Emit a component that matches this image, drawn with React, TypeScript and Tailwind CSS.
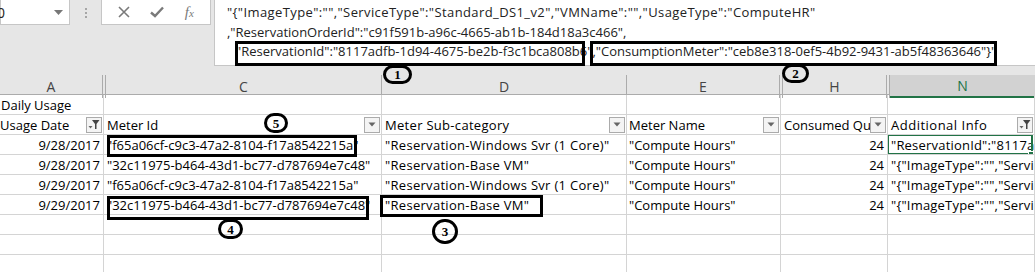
import React from 'react';

const font = { fontFamily: '"Open Sans", "Liberation Sans", sans-serif' };

const DropBtn = () => (
  <div className="w-[16px] h-[16px] shrink-0 border border-[#ababab] bg-[#f4f4f4] flex items-center justify-center mr-[1px]">
    <svg width="8" height="5" viewBox="0 0 8 5">
      <path d="M0.5 0.5 L7.5 0.5 L4 4.5 Z" fill="#666" />
    </svg>
  </div>
);

const FilterBtn = () => (
  <div className="w-[16px] h-[16px] shrink-0 border border-[#ababab] bg-[#f4f4f4] flex items-center justify-center mr-[1px]">
    <svg width="12" height="11" viewBox="0 0 12 11">
      <path d="M4 1 L11.5 1 L8.5 5 L8.5 10 L7 10 L7 5 Z" fill="#444" />
      <path d="M0.5 7 L4.5 7 L2.5 9.5 Z" fill="#666" />
    </svg>
  </div>
);

const rows = [
  { date: '9/28/2017', id: '"f65a06cf-c9c3-47a2-8104-f17a8542215a"', sub: '"Reservation-Windows Svr (1 Core)"', info: '"ReservationId":"8117adfb-1d94-4675-be2b' },
  { date: '9/28/2017', id: '"32c11975-b464-43d1-bc77-d787694e7c48"', sub: '"Reservation-Base VM"', info: '"{"ImageType":"","ServiceType":"Standard' },
  { date: '9/29/2017', id: '"f65a06cf-c9c3-47a2-8104-f17a8542215a"', sub: '"Reservation-Windows Svr (1 Core)"', info: '"{"ImageType":"","ServiceType":"Standard' },
  { date: '9/29/2017', id: '"32c11975-b464-43d1-bc77-d787694e7c48"', sub: '"Reservation-Base VM"', info: '"{"ImageType":"","ServiceType":"Standard' },
];

const formula1 = '"{"ImageType":"","ServiceType":"Standard_DS1_v2","VMName":"","UsageType":"ComputeHR"';
const formula2 = ',"ReservationOrderId":"c91f591b-a96c-4665-ab1b-184d18a3c466",';
const formula3 = '"ReservationId":"8117adfb-1d94-4675-be2b-f3c1bca808b6","ConsumptionMeter":"ceb8e318-0ef5-4b92-9431-ab5f48363646"}"';

const grid = 'grid grid-cols-[104px_278px_245px_154px_107px_1fr]';
const cell = 'h-[20px] border-r border-b border-[#d4d4d4] overflow-hidden whitespace-nowrap leading-[20px]';

// annotation boxes + circled numbers drawn over the sheet
const Box = ({ c }: { c: string }) => <div className={`absolute border-[3px] border-black ${c}`} />;
const Circle = ({ n, c }: { n: number; c: string }) => (
  <div
    className={`absolute border-[3px] border-black rounded-full flex items-center justify-center text-[13px] leading-none font-bold text-black ${c}`}
    style={{ fontFamily: '"Liberation Serif", serif' }}
  >
    {n}
  </div>
);

export default function App() {
  return (
    <div className="relative w-[1035px] h-[272px] overflow-hidden bg-white text-[13px] text-black" style={font}>
      {/* Formula bar area */}
      <div className="h-[75px] bg-[#e6e6e6] flex items-start">
        <div className="w-[70px] h-[25px] bg-white border border-t-0 border-[#c6c6c6] flex items-center justify-between pr-[6px]">
          <span className="text-[14px] ml-[-4px] text-[#222]">0</span>
          <svg width="9" height="5" viewBox="0 0 9 5"><path d="M0 0 L9 0 L4.5 5 Z" fill="#777" /></svg>
        </div>
        <div className="w-[31px] h-[25px] flex flex-col items-center justify-center gap-[2px]">
          <div className="w-[2px] h-[2px] bg-[#a6a6a6]" />
          <div className="w-[2px] h-[2px] bg-[#a6a6a6]" />
          <div className="w-[2px] h-[2px] bg-[#a6a6a6]" />
        </div>
        <div className="w-[110px] h-[25px] bg-white border border-t-0 border-[#c6c6c6] flex items-center justify-around px-[6px]">
          <svg width="12" height="12" viewBox="0 0 12 12">
            <path d="M1 1 L11 11 M11 1 L1 11" stroke="#7a7a7a" strokeWidth="1.6" />
          </svg>
          <svg width="14" height="12" viewBox="0 0 14 12">
            <path d="M1 6.5 L5 10 L13 1.5" stroke="#7a7a7a" strokeWidth="2.4" fill="none" />
          </svg>
          <span className="text-[15px] italic text-[#7a7a7a]" style={{ fontFamily: '"Liberation Serif", serif' }}>
            f<span className="text-[11px]">x</span>
          </span>
        </div>
        <div className="ml-[3px] flex-1 h-[66px] bg-white border border-t-0 border-r-0 border-[#c6c6c6] pl-[12px] pt-[3px] text-[#222] leading-[19.5px] whitespace-nowrap">
          <div className="tracking-[0.4px]">{formula1}</div>
          <div>{formula2}</div>
          <div className="pl-[9px]">{formula3}</div>
        </div>
      </div>

      {/* Column letters */}
      <div className="grid grid-cols-[102px_4px_276px_245px_152px_4px_103px_4px_1fr] h-[20px] bg-[#e6e6e6] border-b border-[#ababab] text-[14px] text-[#444]">
        <div className="flex items-center justify-center">A</div>
        <div className="border-x border-[#ababab]" />
        <div className="flex items-center justify-center border-r border-[#ababab]">C</div>
        <div className="flex items-center justify-center border-r border-[#ababab]">D</div>
        <div className="flex items-center justify-center">E</div>
        <div className="border-x border-[#ababab]" />
        <div className="flex items-center justify-center">H</div>
        <div className="border-x border-[#ababab]" />
        <div className="flex items-center justify-center bg-[#d2d2d2] text-[#217346] border-b-2 border-[#217346]">N</div>
      </div>

      {/* Title row */}
      <div className={grid}>
        <div className={`${cell} pl-[1px] overflow-visible`}>Daily Usage</div>
        <div className={cell} />
        <div className={cell} />
        <div className={cell} />
        <div className={cell} />
        <div className={cell} />
      </div>

      {/* Table header row */}
      <div className={grid}>
        <div className={`${cell} flex items-center justify-between`}>
          <span>Usage Date</span>
          <FilterBtn />
        </div>
        <div className={`${cell} flex items-center justify-between`}>
          <span className="pl-[3px]">Meter Id</span>
          <DropBtn />
        </div>
        <div className={`${cell} flex items-center justify-between`}>
          <span className="pl-[3px] tracking-[0.3px]">Meter Sub-category</span>
          <DropBtn />
        </div>
        <div className={`${cell} flex items-center justify-between`}>
          <span className="pl-[2px]">Meter Name</span>
          <DropBtn />
        </div>
        <div className={`${cell} flex items-center`}>
          <span className="pl-[3px] flex-1 overflow-hidden">Consumed Quantity</span>
          <DropBtn />
        </div>
        <div className={`${cell} flex items-center justify-between`}>
          <span className="pl-[3px] tracking-[0.5px]">Additional Info</span>
          <FilterBtn />
        </div>
      </div>

      {/* Data rows */}
      {rows.map((r, i) => (
        <div key={i} className={grid}>
          <div className={`${cell} text-right pr-[3px]`}>{r.date}</div>
          <div className={`${cell} pl-[3px]`}>{r.id}</div>
          <div className={`${cell} pl-[3px] tracking-[0.3px]`}>{r.sub}</div>
          <div className={`${cell} pl-[2px]`}>"Compute Hours"</div>
          <div className={`${cell} text-right pr-[3px]`}>24</div>
          <div className={`${cell} pl-[3px] tracking-[0.2px] ${i === 0 ? 'relative' : ''}`}>
            {r.info}
            {i === 0 && (
              <>
                <div className="absolute left-[-1px] top-[-1px] right-[1px] bottom-[-1px] border-2 border-[#217346]" />
                <div className="absolute right-0 bottom-[-3px] w-[6px] h-[6px] bg-[#217346] border border-white" />
              </>
            )}
          </div>
        </div>
      ))}

      {/* Empty rows */}
      {[0, 1, 2].map((i) => (
        <div key={i} className={grid}>
          <div className={cell} />
          <div className={cell} />
          <div className={cell} />
          <div className={cell} />
          <div className={cell} />
          <div className={cell} />
        </div>
      ))}

      {/* Annotations */}
      <Box c="left-[235px] top-[41px] w-[350px] h-[25px]" />
      <Box c="left-[590px] top-[41px] w-[407px] h-[25px]" />
      <Box c="left-[107px] top-[135px] w-[250px] h-[22px]" />
      <Box c="left-[107px] top-[196px] w-[262px] h-[24px]" />
      <Box c="left-[380px] top-[195px] w-[163px] h-[22px]" />
      <Circle n={1} c="left-[383px] top-[65px] w-[29px] h-[19px]" />
      <Circle n={2} c="left-[782px] top-[64px] w-[27px] h-[19px]" />
      <Circle n={5} c="left-[264px] top-[113px] w-[24px] h-[20px]" />
      <Circle n={4} c="left-[218px] top-[219px] w-[25px] h-[20px]" />
      <Circle n={3} c="left-[432px] top-[219px] w-[26px] h-[25px]" />
    </div>
  );
}
